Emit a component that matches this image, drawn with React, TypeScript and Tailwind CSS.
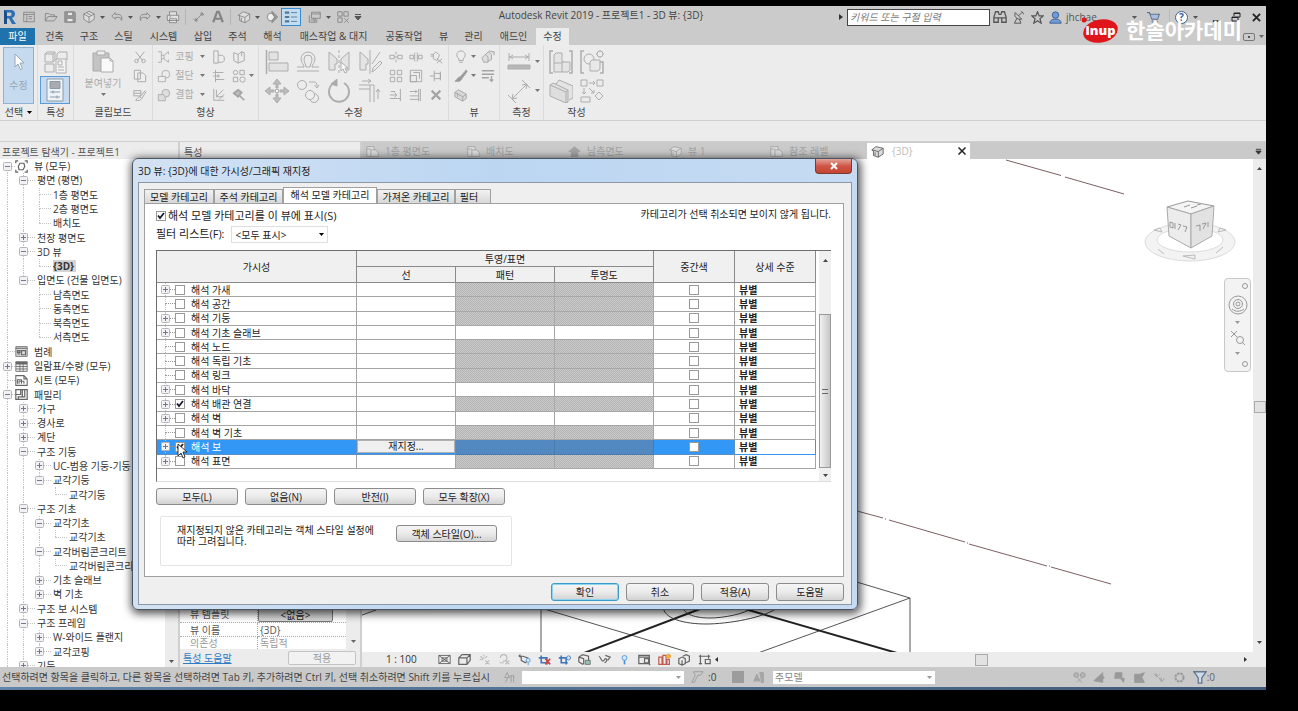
import type { ReactNode } from "react";
import clsx from "clsx";

// 아이콘 공통 래퍼
function Icon({
  size = 16,
  box = 16,
  className = "",
  children,
}: {
  size?: number;
  box?: number;
  className?: string;
  children: ReactNode;
}) {
  return (
    <svg
      width={size}
      height={size}
      viewBox={`0 0 ${box} ${box}`}
      fill="none"
      stroke="currentColor"
      className={clsx("shrink-0", className)}
      aria-hidden="true"
    >
      {children}
    </svg>
  );
}

function Caret({ className = "" }: { className?: string }) {
  return (
    <svg width="5" height="3" viewBox="0 0 5 3" className={clsx("shrink-0", className)} aria-hidden="true">
      <path d="M0 0h5L2.5 3z" fill="currentColor" />
    </svg>
  );
}

// 신속 접근 도구막대 아이콘
const quick = {
  home: (
    <>
      <rect x="2" y="2.500" width="12" height="11" />
      <path d="M2 5h12M5.500 5v8.500M7.500 7.500h4M7.500 10h4" />
    </>
  ),
  open: <path d="M1.500 12.500V4h4l1.500 1.500h5V8M1.500 12.500l3-5H15l-3.500 5z" />,
  save: (
    <>
      <path d="M2 2h11l1 1v11H2z" fill="#999" />
      <path d="M5 2.500h6v4H5zM4.500 9.500h7v4h-7z" fill="#e8e8e8" />
    </>
  ),
  cube: (
    <>
      <path d="M8 1.500l6 3v6l-6 4-6-4v-6z" fill="#ddd" />
      <path d="M2 4.500L8 8l6-3.500M8 8v6.500M5 3l6 3.500" />
    </>
  ),
  undo: <path d="M6 3L2 7l4 3.500V8.500h4c2 0 3 1 3 3.500 1.500-4 0-7-4-7H6z" />,
  redo: <path d="M10 3l4 4-4 3.500V8.500H6c-2 0-3 1-3 3.500C1.500 8 3 5 7 5h3z" />,
  print: (
    <>
      <path d="M4 6V2h8v4M1.500 6h13v6h-13zM4 10h8v4.500H4z" fill="#e2e2e2" />
      <path d="M4 8h2" />
    </>
  ),
  measure: <path d="M4 12l8-8M1.500 10l4 4M10.500 2l3.500 4M4 12l3-.5M4 12l.5-3M12 4l-3 .5M12 4l-.5 3" />,
  text: <path d="M2.500 14L7 2h2l4.500 12M4.500 10h7" strokeWidth="2.500" />,
  house: (
    <>
      <path d="M1.500 6L7 2l7.500 2.500V11L9 14.500 3 12V7z" fill="#ddd" />
      <path d="M1.500 6L9 8.500l5.500-4M9 8.500v6M5 13V9" />
    </>
  ),
  section: (
    <>
      <circle cx="7" cy="8" r="4.500" fill="#eee" />
      <path d="M8 1.500L14.500 8 8 14.500V12l3-4-3-4z" fill="#999" />
    </>
  ),
  windows: <path d="M4 2.500h10v7H4zM4 4.500h10M1.500 6v8H10v-3M6 9l3 2.500L6 14M9 11.500H3" />,
  close: <path d="M2 2h5v5H2zM9 2h5v5H9zM2 9h5v5H2zM9.500 9.500l5 5M14.500 9.500l-5 5" />,
};

// 리본 대형 아이콘 (24 그리드)
const large = {
  types: (
    <>
      <path d="M1 4l2-2h8v8l-2 2H1zM13 4l2-2h8v8M13 4v8M1 14h9v8H1zM1 4h8v8M9 4l2-2" />
      <path d="M12 9h10v14H12z" fill="#f4f4f4" />
      <path d="M14 11h4v4h-4zM14 17h6M14 20h6" />
    </>
  ),
  properties: (
    <>
      <path d="M4 1h16v22H4z" fill="#eef3f8" />
      <path d="M7 3.500h10v7H7z" fill="#a8acb0" />
      <path d="M7 14h10M10 12.500v3M7 19h10M14 17.500v3" />
    </>
  ),
  paste: (
    <>
      <path d="M2 4h16v18H2z" fill="#c4c4c4" />
      <path d="M6 2h8v4H6z" fill="#eee" />
      <path d="M10 9h9l3 3v11H10z" fill="#fafafa" />
      <path d="M19 9v3h3" />
    </>
  ),
  align: (
    <>
      <path d="M1.500 0v24" strokeWidth="1.500" />
      <path d="M4 2h9v8H4zM4 13h19v8H4z" fill="#e2e2e2" />
    </>
  ),
  offset: <path d="M1 21h22M1 17h7c0-3-3-4-3-8a7 7 0 0114 0c0 4-3 5-3 8h7M10 17c0-3-2-4-2-8a4 4 0 018 0c0 4-2 5-2 8z" />,
  mirror: (
    <>
      <path d="M2 2v18h6v-6h2V9zM22 2v18h-6v-6h-2V9z" fill="#e4e4e4" />
      <path d="M12 0v24" strokeDasharray="3 2" />
      <path d="M14 12v9l2-2 2 4 2-1-2-4h3z" fill="#f7f7f7" />
    </>
  ),
  mirrorDraw: (
    <>
      <path d="M2 2v18h6v-6h2V9z" fill="#e4e4e4" />
      <path d="M12 0v24M22 2L14 14M14 22l1-4 7-7 2 2-7 7z" />
    </>
  ),
  move: (
    <>
      <path
        d="M12 0l4 5h-3v4h-2V5H8zM12 24l-4-5h3v-4h2v4h3zM0 12l5-4v3h4v2H5v3zM24 12l-5 4v-3h-4v-2h4V8z"
        fill="#bbb"
      />
      <path d="M10.500 10.500h3v3h-3z" fill="#fff" />
    </>
  ),
  copy: (
    <>
      <circle cx="6" cy="6" r="4.500" />
      <circle cx="18" cy="19" r="4.500" />
      <circle cx="14" cy="16" r="4.500" fill="#eee" />
      <path d="M13 3h5c2 0 3 1 3 4M18.500 6l2.500 3 2-3" />
    </>
  ),
  rotate: (
    <>
      <path d="M7 4a10 10 0 1010 0" strokeWidth="2" />
      <path d="M10 0v7l-6-2z" fill="#aaa" />
    </>
  ),
  trim: <path d="M1 6h15v17M1 10h11v13M4 2h9M10 0l3 2-3 2M20 20v-9M18 13l2-3 2 3M12 6v4" />,
  dimension: (
    <>
      <path d="M2 7h20M2 3v8M22 3v8M6 5L3 7l3 2M18 5l3 2-3 2" />
      <path d="M1 15h22v4H1z" fill="#b8b8b8" />
    </>
  ),
  aligned: <path d="M5 20L20 5M1 16l8 8M15 1l8 8M5 20l1-5M5 20l5-1M20 5l-5 1M20 5l-1 5" />,
  group: (
    <>
      <path d="M4 1H1v22h3M20 1h3v22h-3" strokeWidth="1.500" />
      <path d="M5 5l2-2h6v9h8v8l-2 2H5zM5 13h8v9M13 13l2-2" fill="#e4e4e4" />
    </>
  ),
  similar: (
    <>
      <path d="M4 1H1v22h3M20 12h3v11h-3" strokeWidth="1.500" />
      <circle cx="9" cy="9" r="5" />
      <path d="M10 12l2-2h8v9l-2 2h-8z" fill="#e8e8e8" />
      <circle cx="20" cy="4" r="3" />
      <path d="M20 0v1M20 7v1M16 4h1M23 4h1" />
    </>
  ),
  assembly: (
    <>
      <path d="M7 5l3-4 14 6v12l-4 2" fill="#e4e4e4" />
      <path d="M1 6l3-2 15 7v12l-2 1L1 17z" fill="#dedede" />
      <path d="M1 6l16 7v11M17 13l2-2" />
    </>
  ),
  parts: (
    <path d="M1 1h6v6H1zM17 1h6v6h-6zM9 4h6M13 2l2 2-2 2M4 9v6M2 13l2 2 2-2M9 9l5 5M11 14h3v-3M1 18h9v5H1zM19 13l4 4-4 4-4-4z" />
  ),
};

// 리본 소형 아이콘 (16 그리드)
const small = {
  cut: <path d="M3 2l8 10M13 2L5 12M2 12.500a2 2 0 104 0 2 2 0 10-4 0M10 12.500a2 2 0 104 0 2 2 0 10-4 0" />,
  copyClip: <path d="M1.500 1.500h7v10h-7zM5.500 4.500h6l3 3v7h-9z" fill="#eee" />,
  match: <path d="M1 3h8v6H1zM1 6h8M14 3L8 10M8 10l2 2 5-8M8 10c-2 0-3 2-5 4 3 1 6 0 7-2" />,
  cope: <path d="M1 2h4v12H1M5 6h3l5-4M5 10h3l5 4M8 6v4M13 2v3M13 14v-3" />,
  cutGeom: (
    <>
      <circle cx="10" cy="6" r="4.500" />
      <path d="M1.500 8.500h8v6h-8z" fill="#eee" />
    </>
  ),
  join: (
    <>
      <circle cx="10" cy="6" r="4.500" fill="#ddd" />
      <path d="M1.500 7.500h6l2 3v4h-8z" fill="#ddd" />
    </>
  ),
  wall: <path d="M2 1h5v5h5l2 2v4l-2 2H7v1H2zM7 6v8" />,
  panel: <path d="M2 3l5 2v10l-5-3zM7 5l4-3 3 1v9l-7 3M11 2v5" />,
  split: <path d="M4 1v14M4 4h9M4 8h5M4 12h10M1 4h2M1 8h2M7 6v4" />,
  unjoin: (
    <>
      <circle cx="4" cy="4" r="2.500" />
      <path d="M9 1.500h5v5H9zM1.500 9.500h5v5h-5z" />
      <circle cx="12" cy="12" r="3" />
    </>
  ),
  beam: <path d="M2 1v13h12M5 2v8h8M5 10l8-8M8 13l6-6" />,
  hammer: <path d="M2 6l5-4 4 3-4 5zM8 8l6 6" fill="#bbb" strokeWidth="2" />,
  splitEl: <path d="M1 6h5v4H1zM10 6h5v4h-5zM8 2v3M8 11v3M6 8h4" />,
  splitGap: <path d="M1 6h4v4H1zM11 6h4v4h-4zM6.500 3v10M9.500 3v10" />,
  unpin: <path d="M2 5h3l3-3M5 5v5l4 2 3-6-4-4M9 10l6 5M15 10l-6 5M2 7h3" />,
  array: <path d="M1.500 1.500h5v5h-5zM9.500 1.500h5v5h-5zM1.500 9.500h5v5h-5zM9.500 9.500h5v5h-5z" />,
  scale: <path d="M1.500 1.500h13v13h-13zM1.500 7.500h7v7h-7zM5 4h7v7" />,
  pin: <path d="M6 2v12M6 5h7v6H6M13 3v10M1 8h5" />,
  extend: <path d="M1 8h7M1 12h9M6 5l3 3-3 3M13 1v14M10 12h3M2 4h5" />,
  extendMulti: <path d="M1 4h8M7 2l2 2-2 2M1 9h10M1 13h10M13 1v14M11 1v14" />,
  remove: <path d="M3 3l10 10M13 3L3 13" strokeWidth="2.500" />,
  bulb: <path d="M5.500 12v-2C1 6 4 1 8 1s7 5 2.500 9v2zM6 14h4" />,
  displace: <path d="M1 9l4-4 3 3v6H3zM5 5l4-3 3 3v6l-4 2M12 2h3v4M9 1l5 1" fill="#ddd" />,
  brush: <path d="M14 1L7 9l2 2 6-8zM7 9c-3 0-3 3-6 5 4 1 7 0 8-3" fill="#999" />,
  lines: <path d="M1 2h14M1 6h14M1 10h8M12 8v6M10 12l2 2 2-2" strokeWidth="1.500" />,
  boxView: <path d="M1 5l4-3 9 5v5l-4 3-9-5zM1 5l9 5v5M10 10l4-3M4 6v4" fill="#d8d8d8" />,
};

type SmallName = keyof typeof small;
type LargeName = keyof typeof large;

function Small({ name, label }: { name: SmallName; label: string }) {
  return (
    <button type="button" aria-label={label} className="grid h-[19px] w-5 place-items-center text-[#a4a4a4]">
      <Icon size={14}>{small[name]}</Icon>
    </button>
  );
}

function Large({ name, label }: { name: LargeName; label: string }) {
  return (
    <button type="button" aria-label={label} className="grid h-[29px] w-[31px] place-items-center text-[#adadad]">
      <Icon size={24} box={24}>
        {large[name]}
      </Icon>
    </button>
  );
}

function RibbonPanel({
  title,
  className,
  children,
}: {
  title: ReactNode;
  className: string;
  children: ReactNode;
}) {
  return (
    <section className={clsx("flex h-full shrink-0 flex-col border-r border-[#dcdcdc]", className)}>
      <div className="flex h-[59px] items-start justify-center pt-0.5">{children}</div>
      <div className="flex items-center justify-center gap-1 leading-4 text-[#444]">{title}</div>
    </section>
  );
}

function QuickButton({ name, label }: { name: keyof typeof quick; label: string }) {
  return (
    <button type="button" aria-label={label} className="grid h-5 w-[19px] place-items-center text-[#858585]">
      <Icon size={14}>{quick[name]}</Icon>
    </button>
  );
}

function QuickCaret() {
  return (
    <button type="button" aria-label="더 보기" className="grid h-5 w-[9px] place-items-center text-[#555]">
      <Caret />
    </button>
  );
}

function TitleBar() {
  return (
    <header className="flex h-[22px] items-center bg-[#cbcbcb]">
      <div className="flex items-center">
        <button type="button" aria-label="Revit" className="grid h-5 w-[19px] place-items-center">
          <svg width="13" height="14" viewBox="0 0 13 14" aria-hidden="true">
            <path d="M1 0h6c4 0 5 2 5 4s-1 3-3 4l4 6H9L6 8.500H4V14H1z" fill="#2d6fb5" />
            <path d="M4 2.500h3c2 0 2 3.500 0 3.500H4z" fill="#cbcbcb" />
            <path d="M1 0l3 2.500V14H1z" fill="#1c4f8a" />
          </svg>
        </button>
        <QuickButton name="home" label="홈" />
        <span className="w-[3px]" />
        <QuickButton name="open" label="열기" />
        <QuickButton name="save" label="저장" />
        <QuickButton name="cube" label="동기화" />
        <QuickCaret />
        <QuickButton name="undo" label="명령취소" />
        <QuickCaret />
        <QuickButton name="redo" label="명령복구" />
        <QuickCaret />
        <QuickButton name="print" label="인쇄" />
        <span className="mx-[3px] h-4 w-px bg-[#b5b5b5]" />
        <QuickButton name="measure" label="측정" />
        <QuickButton name="text" label="문자" />
        <span className="mx-[3px] h-4 w-px bg-[#b5b5b5]" />
        <QuickButton name="house" label="기본 3D 뷰" />
        <QuickCaret />
        <QuickButton name="section" label="단면도" />
        <button
          type="button"
          aria-label="가는 선"
          className="mr-1 grid h-[18px] w-5 place-items-center border border-[#3a8ad0] bg-[#c2dcf3] text-[#5a7590]"
        >
          <Icon size={14}>
            <path d="M1 3h5M1 8h5M1 13h5" strokeWidth="2.500" />
            <path d="M8 3h7M8 8h7M8 13h7" />
          </Icon>
        </button>
        <QuickButton name="windows" label="창 전환" />
        <QuickCaret />
        <QuickButton name="close" label="숨겨진 창 닫기" />
        <button type="button" aria-label="사용자화" className="grid h-5 w-[11px] place-items-center text-[#555]">
          <Icon size={8} box={8}>
            <path d="M1 1.500h6" />
            <path d="M1 3.500h6L4 7z" fill="currentColor" />
          </Icon>
        </button>
      </div>
      <h1 className="flex-1 pb-1 text-center text-[10px] text-[#444]">
        Autodesk Revit 2019 - 프로젝트1 - 3D 뷰: {"{3D}"}
      </h1>
      <div className="flex items-center text-[#555]">
        <svg width="4" height="6" viewBox="0 0 4 6" className="mr-1" aria-hidden="true">
          <path d="M0 0l4 3-4 3z" fill="#333" />
        </svg>
        <input
          type="text"
          aria-label="검색"
          placeholder="키워드 또는 구절 입력"
          className="h-[17px] w-[143px] border border-[#444] bg-white px-0.5 text-[10px] italic placeholder:text-[#777]"
        />
        <button type="button" aria-label="검색 실행" className="grid w-[19px] place-items-center">
          <Icon size={14}>
            <path d="M1 14V8l2-6h3l1 3h2l1-3h3l2 6v6h-5V9H6v5zM1 9h5M10 9h5" strokeWidth="1.500" />
          </Icon>
        </button>
        <button type="button" aria-label="통신 센터" className="grid w-[19px] place-items-center">
          <Icon size={13}>
            <path d="M4 2c-2 5 2 9 8 8zM8 6l4-4M11 1c2 0 3 1 3 3M6 9l-3 6h8l-2-5" strokeWidth="1.200" />
          </Icon>
        </button>
        <button type="button" aria-label="즐겨찾기" className="grid w-[19px] place-items-center">
          <Icon size={13}>
            <path d="M8 1l2 5h5l-4 3.500 1.500 5.500L8 12l-4.500 3L5 9.500 1 6h5z" strokeWidth="1.500" />
          </Icon>
        </button>
        <button type="button" className="flex w-[85px] items-center gap-1 pl-0.5 text-[10px]">
          <Icon size={13} className="text-[#31558c]">
            <circle cx="8" cy="5" r="4" fill="#6f9bd8" />
            <path d="M1 15c0-3 3-5 5-5h4c2 0 5 2 5 5z" fill="#6f9bd8" />
          </Icon>
          jhchae
        </button>
        <Caret className="mr-[5px]" />
        <button type="button" aria-label="앱 스토어" className="grid w-[23px] place-items-center text-[#5f6f90]">
          <Icon size={13}>
            <path d="M0 2h3l3 8h7l2-6H4" strokeWidth="1.500" />
            <path d="M5 5h9l-1 4H6z" fill="#a9c0e4" stroke="none" />
            <circle cx="7" cy="13" r="1" />
            <circle cx="12" cy="13" r="1" />
          </Icon>
        </button>
        <span className="mr-[5px] ml-1 h-4 w-px bg-[#bbb]" />
        <button
          type="button"
          aria-label="도움말"
          className="grid size-[13px] place-items-center rounded-full border border-[#44618f] bg-white text-[10px] leading-none font-bold text-[#2f5ea8]"
        >
          ?
        </button>
        <Caret className="ml-[5px]" />
        <button type="button" aria-label="최소화" className="ml-2 grid w-5 place-items-center text-[#222]">
          <Icon size={9} box={10}>
            <path d="M1 9h7" strokeWidth="2" />
          </Icon>
        </button>
        <button type="button" aria-label="복원" className="grid w-5 place-items-center text-[#222]">
          <Icon size={10} box={10}>
            <path d="M3 4V1h6v4H7M1 5h6v4H1zM1 5.500h6M3 1.500h6" />
          </Icon>
        </button>
        <button type="button" aria-label="닫기" className="grid w-5 place-items-center text-[#222]">
          <Icon size={9} box={10}>
            <path d="M1 1l8 8M9 1L1 9" strokeWidth="2" />
          </Icon>
        </button>
      </div>
    </header>
  );
}

const menuTabs = [
  { label: "건축", width: "w-[35px]" },
  { label: "구조", width: "w-[34px]" },
  { label: "스틸", width: "w-[35px]" },
  { label: "시스템", width: "w-[45px]" },
  { label: "삽입", width: "w-[34px]" },
  { label: "주석", width: "w-[35px]" },
  { label: "해석", width: "w-[35px]" },
  { label: "매스작업 & 대지", width: "w-[87px]" },
  { label: "공동작업", width: "w-[54px]" },
  { label: "뷰", width: "w-[25px]" },
  { label: "관리", width: "w-[35px]" },
  { label: "애드인", width: "w-[45px]" },
];

function MenuTabs() {
  return (
    <nav className="flex h-[17px] items-stretch bg-[#cbcbcb] text-[#444]">
      <button type="button" className="mr-0.5 w-[35px] bg-[#1f72ab] text-white">
        파일
      </button>
      {menuTabs.map((tab) => (
        <button key={tab.label} type="button" className={clsx("whitespace-nowrap", tab.width)}>
          {tab.label}
        </button>
      ))}
      <button type="button" className="w-[33px] bg-[#ececec]">
        수정
      </button>
      <span className="flex-1" />
      <button type="button" aria-label="리본 최소화" className="flex items-center gap-1 pr-0.5 text-[#666]">
        <span className="grid h-2 w-3 place-items-center rounded-xs border border-[#777]">
          <span className="size-0.5 bg-[#555]" />
        </span>
        <Caret />
      </button>
    </nav>
  );
}

const shapeRows: { icon: SmallName; label: string; extra: SmallName[]; more?: boolean }[] = [
  { icon: "cope", label: "코핑", extra: ["wall", "panel"] },
  { icon: "cutGeom", label: "절단", extra: ["split", "unjoin"], more: true },
  { icon: "join", label: "결합", extra: ["beam", "hammer"] },
];

const modifyLarge: LargeName[] = ["align", "offset", "mirror", "mirrorDraw", "move", "copy", "rotate", "trim"];
const modifySmall: SmallName[] = [
  "splitEl",
  "splitGap",
  "unpin",
  "array",
  "scale",
  "pin",
  "extend",
  "extendMulti",
  "remove",
];

function Ribbon() {
  return (
    <div className="flex h-[76px] shrink-0 border-b border-[#cfcfcf] bg-[#ececec]">
      <RibbonPanel
        className="w-[38px]"
        title={
          <>
            선택 <Caret className="text-black" />
          </>
        }
      >
        <button
          type="button"
          className="flex h-[57px] w-[31px] flex-col items-center gap-2 border border-[#8fb2d4] bg-[#c5daee] pt-1.5 text-[#9aa7b5]"
        >
          <Icon size={16}>
            <path d="M4 0v13l3-3 2.500 5.500 2-1L9 9h4z" fill="#fff" />
          </Icon>
          수정
        </button>
      </RibbonPanel>
      <RibbonPanel className="w-9" title="특성">
        <div className="flex flex-col">
          <Large name="types" label="유형 특성" />
          <button
            type="button"
            aria-label="특성"
            className="grid h-7 w-[30px] place-items-center border border-[#5b9bd5] bg-[#c5daee] text-[#8d99a5]"
          >
            <Icon size={24} box={24}>
              {large.properties}
            </Icon>
          </button>
        </div>
      </RibbonPanel>
      <RibbonPanel className="w-[79px]" title="클립보드">
        <button type="button" className="flex w-[54px] flex-col items-center gap-1 pt-0.5 leading-3 text-[#aaa]">
          <Icon size={24} box={24}>
            {large.paste}
          </Icon>
          붙여넣기
          <Caret className="text-[#777]" />
        </button>
        <div className="flex flex-col">
          <Small name="cut" label="잘라내기" />
          <Small name="copyClip" label="클립보드로 복사" />
          <Small name="match" label="유형 일치" />
        </div>
      </RibbonPanel>
      <RibbonPanel className="w-[106px]" title="형상">
        <div className="flex flex-col">
          {shapeRows.map((row) => (
            <div key={row.label} className="flex h-[19px] items-center text-[#aaa]">
              <button type="button" className="flex items-center gap-1">
                <Icon size={14}>{small[row.icon]}</Icon>
                {row.label}
              </button>
              <Caret className="mr-1 ml-1.5 text-[#777]" />
              {row.extra.map((name) => (
                <Small key={name} name={name} label={name} />
              ))}
              <Caret className={row.more ? "text-[#777]" : "text-transparent"} />
            </div>
          ))}
        </div>
      </RibbonPanel>
      <RibbonPanel className="w-[190px]" title="수정">
        <div className="grid grid-cols-4">
          {modifyLarge.map((name) => (
            <Large key={name} name={name} label={name} />
          ))}
        </div>
        <div className="grid grid-cols-3">
          {modifySmall.map((name) => (
            <Small key={name} name={name} label={name} />
          ))}
        </div>
      </RibbonPanel>
      <RibbonPanel className="w-[51px]" title="뷰">
        <div className="flex flex-col">
          <div className="flex items-center">
            <Small name="bulb" label="숨기기" />
            <Caret className="mr-0.5 text-[#777]" />
            <Small name="displace" label="요소 변위" />
          </div>
          <div className="flex items-center">
            <Small name="brush" label="재지정" />
            <Caret className="mr-0.5 text-[#777]" />
            <Small name="lines" label="선 작업" />
          </div>
          <Small name="boxView" label="선택 상자" />
        </div>
      </RibbonPanel>
      <RibbonPanel className="w-11" title="측정">
        <div className="flex flex-col">
          <div className="flex items-center">
            <Large name="dimension" label="두 참조 간 측정" />
            <Caret className="text-[#777]" />
          </div>
          <div className="flex items-center">
            <Large name="aligned" label="정렬 치수" />
            <Caret className="text-[#777]" />
          </div>
        </div>
      </RibbonPanel>
      <RibbonPanel className="w-[66px] border-transparent" title="작성">
        <div className="grid grid-cols-2">
          <Large name="group" label="그룹 작성" />
          <Large name="similar" label="유사 작성" />
          <Large name="assembly" label="조립품 작성" />
          <Large name="parts" label="부품 작성" />
        </div>
      </RibbonPanel>
    </div>
  );
}

interface TreeNode {
  level: number;
  label: string;
  state?: "open" | "closed";
  icon?: "view" | "legend" | "schedule" | "sheet" | "family";
  current?: boolean;
}

const tree: TreeNode[] = [
  { level: 0, label: "뷰 (모두)", state: "open", icon: "view" },
  { level: 1, label: "평면 (평면)", state: "open" },
  { level: 2, label: "1층 평면도" },
  { level: 2, label: "2층 평면도" },
  { level: 2, label: "배치도" },
  { level: 1, label: "천장 평면도", state: "closed" },
  { level: 1, label: "3D 뷰", state: "open" },
  { level: 2, label: "{3D}", current: true },
  { level: 1, label: "입면도 (건물 입면도)", state: "open" },
  { level: 2, label: "남측면도" },
  { level: 2, label: "동측면도" },
  { level: 2, label: "북측면도" },
  { level: 2, label: "서측면도" },
  { level: 0, label: "범례", icon: "legend" },
  { level: 0, label: "일람표/수량 (모두)", state: "closed", icon: "schedule" },
  { level: 0, label: "시트 (모두)", icon: "sheet" },
  { level: 0, label: "패밀리", state: "open", icon: "family" },
  { level: 1, label: "가구", state: "closed" },
  { level: 1, label: "경사로", state: "closed" },
  { level: 1, label: "계단", state: "closed" },
  { level: 1, label: "구조 기둥", state: "open" },
  { level: 2, label: "UC-범용 기둥-기둥", state: "closed" },
  { level: 2, label: "교각기둥", state: "open" },
  { level: 3, label: "교각기둥" },
  { level: 1, label: "구조 기초", state: "open" },
  { level: 2, label: "교각기초", state: "open" },
  { level: 3, label: "교각기초" },
  { level: 2, label: "교각버림콘크리트", state: "open" },
  { level: 3, label: "교각버림콘크리트" },
  { level: 2, label: "기초 슬래브", state: "closed" },
  { level: 2, label: "벽 기초", state: "closed" },
  { level: 1, label: "구조 보 시스템", state: "closed" },
  { level: 1, label: "구조 프레임", state: "open" },
  { level: 2, label: "W-와이드 플랜지", state: "closed" },
  { level: 2, label: "교각코핑", state: "closed" },
  { level: 1, label: "기둥", state: "closed" },
];

const treeIcons = {
  view: <path d="M1 4V1h3M12 1h3v3M15 12v3h-3M4 15H1v-3M6 4h5l1 4-2 4H5L4 8z" strokeWidth="1.500" />,
  legend: (
    <>
      <path d="M1 2h14v12H1z" fill="#ddd" />
      <path d="M1 4h14M3 7h3v2H3zM3 11h3M8 7h5v5H8z" strokeWidth="1.500" />
    </>
  ),
  schedule: (
    <>
      <path d="M1 2h14v12H1z" fill="#eee" />
      <path d="M1 4h14" strokeWidth="3" />
      <path d="M6 4v10M10 4v10M1 8h14M1 11h14" />
    </>
  ),
  sheet: <path d="M1 2h10l4 4v8H1zM11 2v4h4M3 12V7h5v5M5 12V9h6v3" strokeWidth="1.300" />,
  family: <path d="M1 2h14v12H1zM1 8h6V2M9 2v9H4v3M9 11h3V2" strokeWidth="1.500" />,
};

// 같은 레벨의 다음 형제가 있으면 세로 안내선을 이어서 그림
function hasSibling(index: number, level: number) {
  for (let i = index + 1; i < tree.length; i++) {
    if (tree[i].level < level) return false;
    if (tree[i].level === level) return true;
  }
  return level < 2;
}

function Toggle({ open, className = "" }: { open: boolean; className?: string }) {
  return (
    <svg
      width="9"
      height="9"
      viewBox="0 0 9 9"
      className={clsx("pointer-events-none", className)}
      aria-hidden="true"
    >
      <rect x="0.500" y="0.500" width="8" height="8" rx="1" fill="#f2f2f5" stroke="#b4b4bc" />
      <path d={open ? "M2 4.500h5" : "M2 4.500h5M4.500 2v5"} stroke="#77778c" />
    </svg>
  );
}

function Branch({ top, bottom }: { top: boolean; bottom: boolean }) {
  return (
    <span className="flex w-4 shrink-0 flex-col self-stretch pl-1">
      <span className={clsx("flex-1 border-l border-dotted", top ? "border-[#c4c4c4]" : "border-transparent")} />
      <span className={clsx("flex-1 border-l border-dotted", bottom ? "border-[#c4c4c4]" : "border-transparent")} />
    </span>
  );
}

function ProjectBrowser() {
  return (
    <aside className="flex w-[180px] shrink-0 flex-col overflow-hidden border-r-2 border-[#cfcfcf] bg-[#ececec] pt-0.5">
      <h2 className="h-[15px] pl-0.5 leading-4 text-[#555]">프로젝트 탐색기 - 프로젝트1</h2>
      <div className="flex min-h-0 flex-1 bg-white">
        <ul className="grid h-[514px] min-w-0 flex-1 auto-rows-fr overflow-hidden pl-[3px] text-[#333]">
          {tree.map((node, index) => (
            <li key={index} className="flex items-center whitespace-nowrap">
              {Array.from({ length: node.level }, (_, level) => {
                const line = hasSibling(index, level);
                return <Branch key={level} top={line} bottom={line} />;
              })}
              <span className="relative flex shrink-0 items-center self-stretch">
                <Branch top={index > 0} bottom={hasSibling(index, node.level)} />
                <span
                  className={clsx(
                    "absolute left-1 border-t border-dotted border-[#c4c4c4]",
                    node.icon ? "w-2" : "w-3"
                  )}
                />
                {node.state && <Toggle open={node.state === "open"} className="absolute left-0" />}
              </span>
              {node.icon && (
                <Icon size={13} className="mr-1 -ml-1 text-[#666]">
                  {treeIcons[node.icon]}
                </Icon>
              )}
              <span
                className={clsx(
                  "ml-0.5 leading-3",
                  node.current && "bg-[#d4d4d4] pr-0.5 font-bold"
                )}
              >
                {node.label}
              </span>
            </li>
          ))}
        </ul>
        <div className="flex w-[13px] items-end justify-center bg-[#ececec] pb-1">
          <Caret className="text-[#555]" />
        </div>
      </div>
    </aside>
  );
}

function PropertiesPanel() {
  return (
    <aside className="flex w-[182px] shrink-0 flex-col border-r-2 border-[#cfcfcf] bg-[#ececec] pt-0.5">
      <h2 className="h-4 pl-1 leading-4 text-[#555]">특성</h2>
      <div className="flex min-h-0 flex-1 items-end overflow-hidden bg-white">
        <table className="flex-1 table-fixed border-separate border-spacing-0 text-[#555]">
          <tbody>
            <tr className="h-[14px]">
              <th className="w-[78px] border-r border-b border-dotted border-[#aaa] pl-2.5 text-left font-normal">
                뷰 템플릿
              </th>
              <td className="border-b border-dotted border-[#aaa]">
                <button
                  type="button"
                  className="block h-3.5 w-[75px] rounded-b-xs border border-[#777] bg-[#d6d6d6] leading-3 text-[#222]"
                >
                  &lt;없음&gt;
                </button>
              </td>
            </tr>
            <tr className="h-[14px]">
              <th className="border-r border-b border-dotted border-[#aaa] pl-2.5 text-left leading-3 font-normal">
                뷰 이름
              </th>
              <td className="border-b border-dotted border-[#aaa] pl-0.5 leading-3">{"{3D}"}</td>
            </tr>
            <tr className="h-3 text-[#999]">
              <th className="border-r border-dotted border-[#aaa] pl-2.5 text-left leading-3 font-normal">의존성</th>
              <td className="pl-0.5 leading-3">독립적</td>
            </tr>
          </tbody>
        </table>
        <div className="flex w-3.5 items-end justify-center self-stretch bg-[#ececec] pb-1.5">
          <Caret className="text-[#666]" />
        </div>
      </div>
      <div className="flex h-[18px] items-center justify-between pr-1 pl-[3px]">
        <a href="#help" className="text-[#2f7cc4] underline">
          특성 도움말
        </a>
        <button
          type="button"
          disabled
          className="h-[14px] w-[68px] rounded-xs border border-[#c4c4c4] bg-[#f2f2f2] leading-3 text-[#999]"
        >
          적용
        </button>
      </div>
    </aside>
  );
}

const viewTabs = [
  { label: "1층 평면도", icon: "plan" },
  { label: "배치도", icon: "plan" },
  { label: "남측면도", icon: "elevation" },
  { label: "뷰 1", icon: "cube" },
  { label: "참조 레벨", icon: "plan" },
];

function ViewIcon({ type }: { type: string }) {
  return (
    <Icon size={13}>
      {type === "plan" && <path d="M6 14H1V2h9v4M6 6h6l3 3v5H6zM1 5h5" fill="#dcdcdc" />}
      {type === "elevation" && <path d="M1 8l7-6 7 6h-3v6H4V8z" fill="currentColor" />}
      {type === "cube" && (
        <>
          <path d="M1 6L6 2l9 2v7l-6 4-6-2V7z" fill="#ddd" />
          <path d="M1 6l8 2 6-4M9 8v7M5 13V9" />
        </>
      )}
    </Icon>
  );
}

// 뷰 큐브와 모델 외곽선
function ModelDrawing() {
  return (
    <svg className="block size-full" aria-hidden="true">
      <g transform="translate(-362 -159)" fill="none">
        <path d="M1006 160l55 15.500M1065 177l59 17" stroke="#7d5f63" />
        <path d="M857 511l26 7M889 520l76 22M969 544l78 22M1051 567l60 17" stroke="#7d5f63" />
        <path d="M885 519h1M967 543h1M1049 566h1" stroke="#7d5f63" />
        <path d="M850 580l60 18v55M910 598l-152 55M541 600v53M541 608l150 45M362 615l14-5" stroke="#555" />
        <path d="M700 609l-116 44M745 609l152 44" stroke="#222" strokeWidth="2" />
        <path d="M663 606c0 13 22 18 43 18s60-6 74-18M683 606c0 9 14 12 27 12s35-4 42-10" stroke="#444" />
        <ellipse cx="1190" cy="242" rx="45" ry="19" fill="#f3f3f3" stroke="#dcdcdc" />
        <ellipse cx="1190" cy="240" rx="33" ry="12" fill="#fff" stroke="#dcdcdc" />
        <path d="M1154 230l8 2-2-4zM1226 230l-8 2 2-4zM1158 249l6 5M1183 256l12-1v4zM1216 253l7-6" stroke="#bbb" />
        <path d="M1167 207l21-6 26 5-23 8z" fill="#f4f4f4" stroke="#9a9a9a" />
        <path d="M1167 207l24 7v34l-22-12z" fill="#ececec" stroke="#aaa" />
        <path d="M1214 206l-23 8v34l21-12z" fill="#e2e2e2" stroke="#aaa" />
        <path
          d="M1170 222l3 1v5l-3-1zM1175 223v6M1178 224l3 1-3 5M1183 226l4 1-2 5M1196 226l4-1v6M1202 224l4-1-3 6M1208 222v5M1184 207l6-2M1191 208l6-2M1197 205l4-1"
          stroke="#999"
        />
      </g>
    </svg>
  );
}

function NavigationBar() {
  return (
    <div className="absolute top-[119px] right-0.5 flex h-[94px] w-[27px] flex-col items-center justify-between rounded-sm border border-[#c8c8c8] bg-[#f3f3f3] py-1 text-[#999]">
      <Icon size={6} box={6} className="mr-0.5 self-end">
        <circle cx="3" cy="3" r="2.500" />
      </Icon>
      <button type="button" aria-label="탐색 휠">
        <Icon size={20} box={20}>
          <circle cx="10" cy="10" r="9" />
          <circle cx="10" cy="9" r="4.500" />
          <circle cx="10" cy="9" r="2" />
          <path d="M4 14c4 3 8 3 12 0" />
        </Icon>
      </button>
      <Caret />
      <button type="button" aria-label="줌 영역">
        <Icon size={16}>
          <path d="M1 1l6 6M7 1L1 7M12 12l3 3" />
          <circle cx="10" cy="10" r="3.500" />
        </Icon>
      </button>
      <Caret />
      <Icon size={6} box={6} className="mr-0.5 self-end">
        <circle cx="3" cy="3" r="2.500" />
      </Icon>
    </div>
  );
}

const viewControls: { name: string; color: string; shape: ReactNode }[] = [
  { name: "상세 수준", color: "text-[#555]", shape: <path d="M1 3h14v10H1zM1 3l14 10M15 3L1 13M5 6h6v4H5z" /> },
  { name: "비주얼 스타일", color: "text-[#666]", shape: <path d="M1 6l4-4h10v7l-4 5H1zM1 6h10v8M11 6l4-4" strokeWidth="1.500" /> },
  { name: "태양 경로", color: "text-[#bbb]", shape: <path d="M7 2v2M2 8h2M3 4l2 2M11 4L9 6M5 9a3 3 0 013-3M9 9l5 5M14 9l-5 5" strokeWidth="1.500" /> },
  { name: "그림자", color: "text-[#bbb]", shape: <path d="M3 6a4 4 0 018 0c0 3-3 4-5 4M2 12h5M9 9l5 5M14 9l-5 5" strokeWidth="1.500" /> },
  {
    name: "렌더링",
    color: "text-[#666]",
    shape: (
      <>
        <path d="M1 4l3 1v4l5 3 3-3V6L6 4zM1 4l2-2" strokeWidth="1.500" />
        <circle cx="12.500" cy="9" r="2.500" stroke="#4a8ed6" fill="#d5e8fa" />
        <path d="M12.500 12v3" stroke="#4a8ed6" />
      </>
    ),
  },
  {
    name: "자르기 뷰",
    color: "text-[#3f78ba]",
    shape: (
      <>
        <path d="M4 3v9h10M1 6h10v8" strokeWidth="2" />
        <path d="M9 7l6 7M15 7l-6 7" stroke="#d04545" strokeWidth="2" />
      </>
    ),
  },
  {
    name: "자르기 영역",
    color: "text-[#3f78ba]",
    shape: (
      <>
        <path d="M4 3v9h8M1 6h9v8" strokeWidth="2" />
        <circle cx="13" cy="6" r="2.500" fill="#d5e8fa" />
      </>
    ),
  },
  {
    name: "뷰 잠금",
    color: "text-[#666]",
    shape: (
      <>
        <path d="M1 5l5-3 7 2v6M1 5v6l5 3M1 5l6 2v7" strokeWidth="1.500" />
        <path d="M9 9h6v5H9z" fill="#9ac4b8" />
      </>
    ),
  },
  { name: "임시 숨기기", color: "text-[#666]", shape: <path d="M1 4c2 0 3 6 5 6s2-4 4-3 0 5-2 5M9 3l6 2-3 4" strokeWidth="1.500" /> },
  {
    name: "숨겨진 요소",
    color: "text-[#4a8ed6]",
    shape: (
      <>
        <circle cx="8" cy="6" r="3" fill="#d5e8fa" />
        <path d="M8 9v5" strokeWidth="2" />
      </>
    ),
  },
  { name: "임시 뷰 특성", color: "text-[#666]", shape: <path d="M1 3h13v10H1zM1 5h13M8 7h5v5H8zM12 12l3 3" strokeWidth="1.500" /> },
  {
    name: "해석 모델",
    color: "text-[#c25b50]",
    shape: (
      <>
        <path d="M1 5h4v9H1zM6 3h4v11H6zM11 8h3v6h-3z" strokeWidth="1.500" />
        <circle cx="13" cy="4" r="2.500" fill="#f5b73d" stroke="#e0982a" />
      </>
    ),
  },
  { name: "변위 세트", color: "text-[#666]", shape: <path d="M1 7l4-2 4 2v6l-4 2-4-2zM6 4l4-2 4 2v6l-4 2M5 9v5" strokeWidth="1.500" /> },
  { name: "구속조건", color: "text-[#666]", shape: <path d="M1 4h14M3 2v12M13 2v5M1 13h4M9 8h6v5H9z" strokeWidth="1.500" /> },
];

function ViewArea() {
  return (
    <main className="flex min-w-0 flex-1 flex-col">
      <div className="flex h-[17px] items-stretch bg-[#cacaca] pt-px text-[#a3a3a3]">
        {viewTabs.map((tab) => (
          <button key={tab.label} type="button" className="flex w-[101px] items-center gap-1.5 pl-1">
            <ViewIcon type={tab.icon} />
            {tab.label}
          </button>
        ))}
        <div className="flex w-[103px] items-center bg-white pl-1">
          <span className="text-[#555]">
            <ViewIcon type="cube" />
          </span>
          <span className="flex-1 pl-2 text-[#bbb]">{"{3D}"}</span>
          <button type="button" aria-label="뷰 닫기" className="pr-1 text-[#222]">
            <Icon size={8} box={8}>
              <path d="M0.500 0.500l7 7M7.500 0.500l-7 7" strokeWidth="1.500" />
            </Icon>
          </button>
        </div>
        <button type="button" aria-label="탭 목록" className="ml-auto px-1 text-[#333]">
          <Icon size={7} box={8}>
            <path d="M1 1.500h6" />
            <path d="M1 3.500h6L4 7z" fill="currentColor" />
          </Icon>
        </button>
      </div>
      <div className="flex min-h-0 flex-1">
        <div className="relative min-w-0 flex-1 overflow-hidden bg-white">
          <ModelDrawing />
          <NavigationBar />
        </div>
        <div className="flex w-[13px] flex-col items-center bg-[#ececec] py-2 text-[#444]">
          <Caret className="rotate-180" />
          <span className="h-[231px]" />
          <span className="size-3 border border-[#aaa] bg-[#e2e2e2]" />
          <Caret className="mt-auto" />
        </div>
      </div>
      <div className="flex h-[15px] items-center bg-[#ececec] text-[#333]">
        <span className="w-[72px] pl-6">1 : 100</span>
        {viewControls.map((item) => (
          <button
            key={item.name}
            type="button"
            aria-label={item.name}
            className={clsx("grid w-5 shrink-0 place-items-center", item.color)}
          >
            <Icon size={13}>{item.shape}</Icon>
          </button>
        ))}
        <Caret className="rotate-90" />
        <div className="flex flex-1 justify-center">
          <span className="h-3 w-[13px] border border-[#aaa] bg-[#e2e2e2]" />
        </div>
        <Caret className="mr-[18px] -rotate-90" />
      </div>
    </main>
  );
}

function StatusSelect({ label, value }: { label: string; value: string }) {
  return (
    <div className="grid w-[162px] shrink-0 items-center">
      <select
        aria-label={label}
        className="col-start-1 row-start-1 h-[13px] w-full appearance-none bg-white pl-0.5 text-[10px] leading-3 text-[#888]"
      >
        <option>{value}</option>
      </select>
      <Caret className="pointer-events-none col-start-1 row-start-1 mr-[3px] justify-self-end text-[#999]" />
    </div>
  );
}

function StatusBar() {
  return (
    <footer className="flex h-5 shrink-0 items-center bg-[#c9c9c9] text-[#444]">
      <p className="w-[497px] overflow-hidden pl-0.5 whitespace-nowrap">
        선택하려면 항목을 클릭하고, 다른 항목을 선택하려면 Tab 키, 추가하려면 Ctrl 키, 선택 취소하려면 Shift 키를
        누르십시
      </p>
      <Icon size={13} className="mx-1.5 text-[#999]">
        <path d="M2 8l3-6 3 6zM3 14l3-6M10 5v9M13 5v9M8 8l3-3 3 3" />
      </Icon>
      <StatusSelect label="작업세트" value="" />
      <Icon size={14} className="ml-1.5 text-[#999]">
        <path d="M4 2h11l-3 4H9l-4 8H2l4-8z" />
      </Icon>
      <span className="w-[25px] pl-1">:0</span>
      <span className="mr-2 ml-[3px] size-3 bg-[#9c9c9c]" />
      <Icon size={13} className="mr-2 text-[#9c9c9c]">
        <path d="M2 13l4-9 4 9M4 10h5M9 2h5v12h-3" fill="#a8a8a8" />
      </Icon>
      <StatusSelect label="설계 옵션" value="주모델" />
      <div className="ml-auto flex items-center gap-[7px] pr-[51px] text-[#999]">
        <Icon size={13}>
          <circle cx="4" cy="5" r="3" fill="#b5b5b5" />
          <circle cx="12" cy="5" r="3" fill="#b5b5b5" />
          <path d="M5 8l6 6M11 8l-6 6" />
        </Icon>
        <Icon size={13}>
          <path d="M1 12L12 2v4l2 2-2 2v4z" fill="#999" />
        </Icon>
        <Icon size={13}>
          <path d="M3 2h8v7h3l-1 5-4-5H2z" fill="#999" />
        </Icon>
        <Icon size={13}>
          <path d="M2 4h6l6-2-3 6 3 6H2z" fill="#999" />
        </Icon>
        <Icon size={13}>
          <path d="M1 3l4 4 3-3M7 8l4 5 3-4M4 3v4M10 8v5" />
        </Icon>
        <Icon size={13}>
          <circle cx="8" cy="8" r="5" strokeWidth="2.500" strokeDasharray="3 1" />
        </Icon>
        <span className="flex items-center text-[#666]">
          <Icon size={14} className="text-[#65768f]">
            <path d="M1 2h14L10 9v6H6V9z" fill="#cddbea" strokeWidth="1.500" />
          </Icon>
          :0
        </span>
      </div>
    </footer>
  );
}

interface Category {
  name: string;
  expandable?: boolean;
  checked?: boolean;
  plain?: boolean;
  selected?: boolean;
}

const categories: Category[] = [
  { name: "해석 가새", expandable: true },
  { name: "해석 공간" },
  { name: "해석 기둥", expandable: true },
  { name: "해석 기초 슬래브", expandable: true, plain: true },
  { name: "해석 노드" },
  { name: "해석 독립 기초" },
  { name: "해석 링크" },
  { name: "해석 바닥", expandable: true, plain: true },
  { name: "해석 배관 연결", expandable: true, checked: true },
  { name: "해석 벽", expandable: true, plain: true },
  { name: "해석 벽 기초" },
  { name: "해석 보", expandable: true, checked: true, selected: true },
  { name: "해석 표면", expandable: true },
];

function CheckBox({ id, checked, label }: { id?: string; checked?: boolean; label?: string }) {
  return (
    <span className="inline-grid size-2.5 shrink-0">
      <input
        id={id}
        type="checkbox"
        aria-label={label}
        defaultChecked={checked}
        className="peer col-start-1 row-start-1 m-0 size-2.5 appearance-none border border-[#999] bg-white"
      />
      <svg
        viewBox="0 0 10 10"
        className="pointer-events-none invisible col-start-1 row-start-1 size-2.5 peer-checked:visible"
        aria-hidden="true"
      >
        <path d="M2 4.500l2 2.500 4-5" fill="none" stroke="#1a1a2e" strokeWidth="1.800" />
      </svg>
    </span>
  );
}

const headCell = "border-r border-b border-[#8a8a8a] bg-[#f0f0f0] p-0 font-normal leading-3";

function CategoryTable() {
  return (
    <table className="h-[218px] min-w-0 flex-1 table-fixed border-separate border-spacing-0 self-start text-[10px] text-[#222]">
      <colgroup>
        <col className="w-[200px]" />
        <col className="w-[99px]" />
        <col className="w-[99px]" />
        <col className="w-[99px]" />
        <col className="w-[81px]" />
        <col />
      </colgroup>
      <thead>
        <tr className="h-4">
          <th rowSpan={2} className={headCell}>
            가시성
          </th>
          <th colSpan={3} className={headCell}>
            투영/표면
          </th>
          <th rowSpan={2} className={headCell}>
            중간색
          </th>
          <th rowSpan={2} className={headCell}>
            상세 수준
          </th>
        </tr>
        <tr className="h-4">
          <th className={headCell}>선</th>
          <th className={headCell}>패턴</th>
          <th className={headCell}>투명도</th>
        </tr>
      </thead>
      <tbody>
        {categories.map((item, index) => {
          const cell = clsx(
            "border-r border-b p-0 leading-3",
            item.selected ? "border-[#5c8fc4]" : "border-[#a5a5a5]",
            item.selected && "bg-[#3297f5]"
          );
          const hatch = clsx(
            "border-r border-b p-0",
            item.selected && "border-[#4a7cae] bg-[#5289c0]",
            !item.selected && item.plain && "border-[#a5a5a5]",
            !item.selected &&
              !item.plain &&
              "border-[#a9a9a9] bg-[repeating-conic-gradient(#b3b3b3_0_25%,#cbcbcb_0_50%)] bg-[length:2px_2px]"
          );
          return (
            <tr key={item.name} className="h-[14px]">
              <td className={cell}>
                <label className="flex h-[13px] items-center">
                  <span className="relative flex w-[18px] shrink-0 items-center self-stretch pl-1">
                    <Branch top bottom={index < categories.length - 1} />
                    <span className="absolute left-2 w-2.5 border-t border-dotted border-[#999]" />
                    {item.expandable && <Toggle open={false} className="absolute left-1" />}
                  </span>
                  <CheckBox checked={item.checked} />
                  <span className={clsx("ml-1.5", item.selected && "text-white")}>{item.name}</span>
                </label>
              </td>
              <td className={cell}>
                {item.selected && (
                  <button
                    type="button"
                    className="block h-[13px] w-full border border-[#b0b0b0] bg-[#efefef] leading-[11px]"
                  >
                    재지정...
                  </button>
                )}
              </td>
              <td className={hatch} />
              <td className={hatch} />
              <td className={clsx(cell, "text-center")}>
                <span className="flex justify-center">
                  <CheckBox label={`${item.name} 중간색`} />
                </span>
              </td>
              <td
                className={clsx(
                  "border-r border-b bg-white p-0 pl-1 leading-3 font-bold",
                  item.selected ? "border-[#3297f5]" : "border-[#a5a5a5]"
                )}
              >
                뷰별
              </td>
            </tr>
          );
        })}
      </tbody>
    </table>
  );
}

function DialogButton({ children, className }: { children: ReactNode; className: string }) {
  return (
    <button
      type="button"
      className={clsx(
        "flex shrink-0 items-center justify-center rounded-[3px] border bg-linear-to-b from-[#f5f5f5] via-[#ebebeb] to-[#d2d2d2] text-[10px] leading-3",
        className
      )}
    >
      {children}
    </button>
  );
}

const dialogTabs = [
  { label: "모델 카테고리", width: "w-[70px]" },
  { label: "주석 카테고리", width: "w-[69px]" },
  { label: "해석 모델 카테고리", width: "w-[94px]", active: true },
  { label: "가져온 카테고리", width: "w-[78px]" },
  { label: "필터", width: "w-9" },
];

function OverrideDialog() {
  return (
    <div
      role="dialog"
      aria-labelledby="dialog-title"
      className="absolute top-[152px] left-[132px] w-[726px] rounded-md border border-[#4a5563] bg-linear-to-r from-[#d3e2f3] via-[#bcd6f2] to-[#c6dbf2] px-[5px] pb-1 text-[11px] text-[#222] shadow-[1px_2px_9px_2px_rgba(0,0,0,0.65)]"
    >
      <div className="flex h-[23px] items-start justify-between">
        <h2 id="dialog-title" className="text-[10px] leading-6">
          3D 뷰: {"{3D}"}에 대한 가시성/그래픽 재지정
        </h2>
        <button
          type="button"
          aria-label="닫기"
          className="grid h-[15px] w-[37px] place-items-center rounded-b-sm border border-t-0 border-[#7c3a36] bg-linear-to-b from-[#e2a49b] via-[#cf5648] to-[#c4432f] text-white"
        >
          <Icon size={8} box={8}>
            <path d="M1 1l6 6M7 1L1 7" strokeWidth="2" />
          </Icon>
        </button>
      </div>
      <div className="border border-[#8d98a6] bg-[#efefef] pt-1 pr-[7px] pb-[3px] pl-[5px]">
        <div role="tablist" className="flex h-4 items-end">
          {dialogTabs.map((tab) => (
            <button
              key={tab.label}
              type="button"
              role="tab"
              aria-selected={!!tab.active}
              className={clsx(
                "border border-b-0 border-[#a0a0a0] text-[10px] leading-3 whitespace-nowrap",
                tab.width,
                tab.active ? "h-4 bg-white pb-0.5" : "h-3.5 bg-linear-to-b from-[#f2f2f2] to-[#d8d8d8]",
                tab.label === "필터" && "pr-2"
              )}
            >
              {tab.label}
            </button>
          ))}
        </div>
        <div className="border border-[#a0a0a0] bg-white pt-1.5 pr-3 pb-2.5 pl-[11px]">
          <div className="flex h-[11px] items-center justify-between leading-3">
            <span className="flex items-center gap-0.5">
              <CheckBox id="show-analytical" checked />
              <label htmlFor="show-analytical">해석 모델 카테고리를 이 뷰에 표시(S)</label>
            </span>
            <span className="pb-1 text-[10px]">카테고리가 선택 취소되면 보이지 않게 됩니다.</span>
          </div>
          <div className="mt-[5px] flex h-[17px] items-center gap-1.5">
            <label htmlFor="filter-list">필터 리스트(F):</label>
            <div className="grid w-[97px] items-center">
              <select
                id="filter-list"
                className="col-start-1 row-start-1 h-[17px] w-full appearance-none border border-[#dedede] bg-white pl-1 text-[10px] leading-3"
              >
                <option>&lt;모두 표시&gt;</option>
              </select>
              <Caret className="pointer-events-none col-start-1 row-start-1 mr-1 justify-self-end text-black" />
            </div>
          </div>
          <div className="mt-[7px] flex h-[232px] border-t border-b border-l border-[#6e6e6e] border-b-[#ddd]">
            <CategoryTable />
            <div className="ml-[3px] flex w-3 flex-col items-center bg-[#f0f0f0] pt-2 pb-1 text-[#444]">
              <Caret className="rotate-180" />
              <span className="mt-[52px] grid h-[154px] w-3 place-items-center border border-[#9a9a9a] bg-linear-to-r from-[#f2f2f2] to-[#c6c6c6]">
                <span className="h-[5px] w-1.5 border-y border-[#666]" />
              </span>
              <Caret className="mt-auto" />
            </div>
          </div>
          <div className="mt-1.5 flex gap-[7px]">
            <DialogButton className="h-[17px] w-[82px] border-[#8c8c8c]">모두(L)</DialogButton>
            <DialogButton className="h-[17px] w-[82px] border-[#8c8c8c]">없음(N)</DialogButton>
            <DialogButton className="h-[17px] w-[82px] border-[#8c8c8c]">반전(I)</DialogButton>
            <DialogButton className="h-[17px] w-[82px] border-[#8c8c8c]">모두 확장(X)</DialogButton>
          </div>
          <div className="mt-[11px] ml-1 flex h-[50px] w-[352px] items-start rounded-xs border border-[#e4e4e4] pt-2 pl-4">
            <p className="w-[219px] text-[10px] leading-[11px]">
              재지정되지 않은 카테고리는 객체 스타일 설정에
              <br />
              따라 그려집니다.
            </p>
            <DialogButton className="h-[17px] w-[101px] border-[#8c8c8c]">객체 스타일(O)...</DialogButton>
          </div>
        </div>
        <div className="mt-1.5 flex justify-end gap-[7px]">
          <DialogButton className="h-[18px] w-[68px] border-[#3c9cc8] ring-1 ring-[#8fd4ee] ring-inset">확인</DialogButton>
          <DialogButton className="h-[18px] w-[68px] border-[#8c8c8c]">취소</DialogButton>
          <DialogButton className="h-[18px] w-[68px] border-[#8c8c8c]">적용(A)</DialogButton>
          <DialogButton className="h-[18px] w-[68px] border-[#8c8c8c]">도움말</DialogButton>
        </div>
      </div>
      <svg
        width="11"
        height="17"
        viewBox="0 0 11 17"
        className="pointer-events-none absolute top-[284px] left-[44px]"
        aria-hidden="true"
      >
        <path d="M1 1v12l3-3 2 5 2-1-2-5h4z" fill="#fff" stroke="#333" />
      </svg>
    </div>
  );
}

function AcademyMark() {
  return (
    <div className="pointer-events-none absolute top-2.5 right-6 flex items-center gap-2">
      <svg width="36" height="28" viewBox="0 0 36 28" aria-hidden="true">
        <ellipse cx="18.500" cy="15" rx="17.500" ry="11.500" transform="rotate(-12 18.500 15)" fill="#e0141b" />
        <circle cx="2" cy="4" r="2.500" fill="#e0141b" />
        <text
          x="18.500"
          y="19"
          textAnchor="middle"
          fill="#fff"
          className="font-['Open_Sans',sans-serif] text-[13px] font-extrabold"
        >
          inup
        </text>
      </svg>
      <span className="text-[21px] leading-7 font-bold text-white">한솔아카데미</span>
    </div>
  );
}

export default function App() {
  return (
    <div className="h-screen bg-black pt-1.5 pr-8 pb-[21px] font-['Open_Sans','Noto_Sans_CJK_KR',sans-serif] text-[10px]">
      <div className="relative flex h-full flex-col">
        <TitleBar />
        <MenuTabs />
        <Ribbon />
        <div className="h-5 shrink-0 bg-[#ececec]" />
        <div className="flex min-h-0 flex-1 border-t border-[#cfcfcf]">
          <ProjectBrowser />
          <PropertiesPanel />
          <ViewArea />
        </div>
        <StatusBar />
        <div className="h-[3px] shrink-0 bg-linear-to-r from-[#5f86aa] to-[#3f5a78]" />
        <OverrideDialog />
        <AcademyMark />
      </div>
    </div>
  );
}
